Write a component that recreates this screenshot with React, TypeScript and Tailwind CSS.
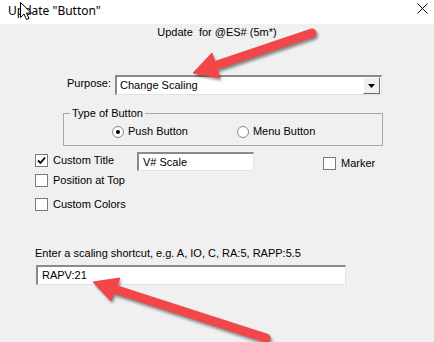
import React from 'react';

const CheckBox = ({ checked = false }: { checked?: boolean }) => (
  <span className="w-[13px] h-[13px] shrink-0 bg-white border border-[#7a7a7a] flex items-center justify-center">
    {checked && (
      <svg width="9" height="9" viewBox="0 0 9 9">
        <path d="M1 4.5 L3.5 7 L8 1.5" fill="none" stroke="#000" strokeWidth="1.8" />
      </svg>
    )}
  </span>
);

const Radio = ({ checked = false }: { checked?: boolean }) => (
  <span className="w-[12px] h-[12px] shrink-0 rounded-full bg-white border border-[#8a8a8a] flex items-center justify-center">
    {checked && <span className="w-[4px] h-[4px] rounded-full bg-black" />}
  </span>
);

const Sunken = ({ className, children }: { className: string; children?: React.ReactNode }) => (
  <div
    className={`bg-white border-t-2 border-l-2 border-b border-r border-t-[#8a8a8a] border-l-[#8a8a8a] border-b-[#e3e3e3] border-r-[#e3e3e3] flex items-center ${className}`}
  >
    {children}
  </div>
);

export default function App() {
  return (
    <div
      className="relative w-[434px] h-[342px] overflow-hidden bg-[#f0f0f0] text-[11px] leading-[13px] text-black"
      style={{ fontFamily: '"Liberation Sans", Arial, sans-serif' }}
    >
      {/* Title bar */}
      <div className="h-[24px] bg-white flex items-center justify-between pl-[8px] pr-[5px]">
        <span className="text-[12px] font-['Noto_Sans',sans-serif] -mt-[4px]">Update "Button"</span>
        <svg width="11" height="11" viewBox="0 0 11 11" className="-mt-[8px] mr-[1px]">
          <path d="M0.5 0.5 L10.5 10.5 M10.5 0.5 L0.5 10.5" stroke="#000" strokeWidth="1" />
        </svg>
      </div>

      {/* Heading */}
      <div className="mt-[2px] text-center whitespace-pre">Update  for @ES# (5m*)</div>

      {/* Purpose */}
      <div className="mt-[36px] flex items-center">
        <span className="w-[115px] text-right pr-[4px] -mt-[3px]">Purpose:</span>
        <Sunken className="w-[267px] h-[20px] pl-[2px] justify-between">
          <span className="pl-[1px]">Change Scaling</span>
          <span className="w-[17px] h-[17px] mr-[1px] bg-[#f0f0f0] border border-t-white border-l-white border-b-[#696969] border-r-[#696969] flex items-center justify-center">
            <svg width="7" height="4" viewBox="0 0 7 4">
              <path d="M0 0 H7 L3.5 4 Z" fill="#000" />
            </svg>
          </span>
        </Sunken>
      </div>

      {/* Type of Button */}
      <fieldset className="mt-[12px] ml-[63px] w-[320px] h-[39px] border border-[#a8a8a8] px-0 pb-0">
        <legend className="ml-[6px] px-[2px]">Type of Button</legend>
        <div className="flex items-center mt-[5px]">
          <div className="flex items-center gap-[4px] ml-[48px]">
            <Radio checked />
            <span>Push Button</span>
          </div>
          <div className="flex items-center gap-[4px] ml-[49px]">
            <Radio />
            <span>Menu Button</span>
          </div>
        </div>
      </fieldset>

      {/* Checkbox options */}
      <div className="mt-[6px] ml-[35px] flex items-start">
        <div className="flex items-center gap-[5px] w-[102px] mt-[2px]">
          <CheckBox checked />
          <span>Custom Title</span>
        </div>
        <Sunken className="w-[117px] h-[19px] pl-[4px]">
          <span>V# Scale</span>
        </Sunken>
        <div className="flex items-center gap-[5px] ml-[69px] mt-[5px]">
          <CheckBox />
          <span>Marker</span>
        </div>
      </div>
      <div className="mt-[3px] ml-[35px] flex items-center gap-[5px]">
        <CheckBox />
        <span>Position at Top</span>
      </div>
      <div className="mt-[11px] ml-[35px] flex items-center gap-[5px]">
        <CheckBox />
        <span>Custom Colors</span>
      </div>

      {/* Shortcut */}
      <div className="mt-[36px] ml-[35px]">Enter a scaling shortcut, e.g. A, IO, C, RA:5, RAPP:5.5</div>
      <Sunken className="mt-[5px] ml-[36px] w-[310px] h-[20px] pl-[4px]">
        <span>RAPV:21</span>
      </Sunken>

      {/* Annotation arrows + cursor overlay */}
      <svg className="absolute inset-0 pointer-events-none" width="434" height="342" viewBox="0 0 434 342">
        <defs>
          <filter id="sh" x="-20%" y="-20%" width="140%" height="140%">
            <feGaussianBlur stdDeviation="1.6" />
          </filter>
        </defs>
        <g opacity="0.45" filter="url(#sh)" transform="translate(1.5 2.5)">
          <line x1="312" y1="33" x2="214" y2="66" stroke="#000" strokeWidth="9" strokeLinecap="round" />
          <polygon points="193,73 212,53 220,78" fill="#000" />
          <line x1="266" y1="338" x2="114" y2="289" stroke="#000" strokeWidth="9" strokeLinecap="round" />
          <polygon points="93,282 120,278 111,301" fill="#000" />
        </g>
        <line x1="312" y1="33" x2="214" y2="66" stroke="#f2464a" strokeWidth="9" strokeLinecap="round" />
        <polygon points="193,73 212,53 220,78" fill="#f2464a" strokeLinejoin="round" stroke="#f2464a" strokeWidth="1" />
        <line x1="266" y1="338" x2="114" y2="289" stroke="#f2464a" strokeWidth="9" strokeLinecap="round" />
        <polygon points="93,282 120,278 111,301" fill="#f2464a" strokeLinejoin="round" stroke="#f2464a" strokeWidth="1" />

        {/* mouse cursor */}
        <path
          d="M20.5 2.5 L20.5 17.5 L24 14 L26.5 19.5 L29 18.5 L26.5 13 L31.5 13 Z"
          fill="#fff"
          stroke="#000"
          strokeWidth="1"
          strokeLinejoin="round"
        />
      </svg>
    </div>
  );
}
